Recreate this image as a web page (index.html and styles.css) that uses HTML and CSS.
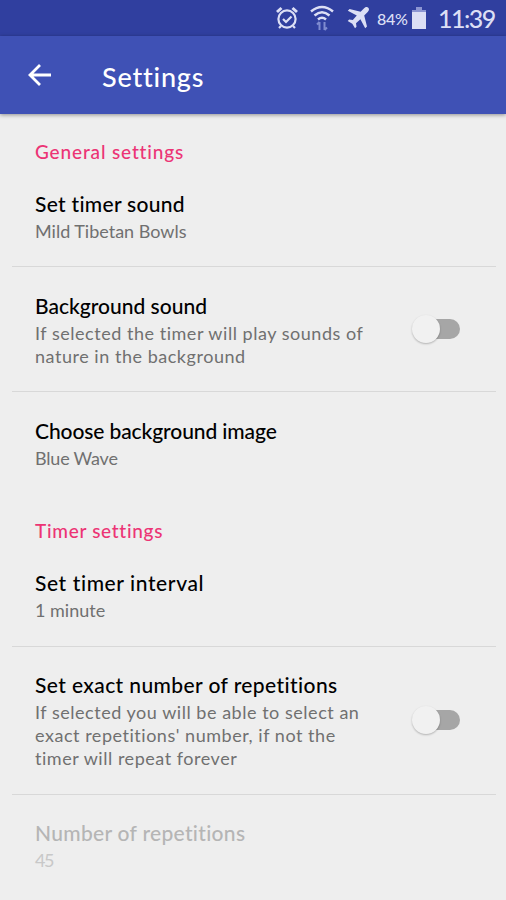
FILE: index.html
```html
<!DOCTYPE html>
<html lang="en">
<head>
  <meta charset="UTF-8" />
  <meta name="viewport" content="width=device-width, initial-scale=1.0"/>
  <title>Settings</title>
  <link rel="stylesheet" href="styles.css">
</head>
<body>
  <div class="status-bar">
    <svg class="icon-alarm" width="22" height="24" viewBox="0 0 22 24" fill="none" stroke="#dcdff5" stroke-width="2.2">
      <circle cx="11" cy="13" r="8.6"/>
      <path d="M7 13l3 3 5.500-5.500"/>
      <path d="M1 6l4.500-4M21 6l-4.500-4" stroke-width="3"/>
      <path d="M5 20l-2 2M17 20l2 2"/>
    </svg>
    <svg class="icon-wifi" width="24" height="26" viewBox="0 0 24 26" fill="none" stroke="#dcdff5" stroke-width="2.5">
      <path d="M1 6.500Q12-2.500 23 6.500"/>
      <path d="M4.500 10.500Q12 4 19.500 10.500"/>
      <path d="M8 14.500Q12 11 16 14.500"/>
      <path d="M9.500 17v8M7 19.500l2.500-2.500M14.500 17v8M17 22.500L14.500 25" stroke="#7f8bd0" stroke-width="2"/>
    </svg>
    <svg class="icon-plane" width="22" height="22" viewBox="0 0 22 22" fill="#dcdff5">
      <path d="M21.300.7c-1.200-1.200-3-.6-4.200.6L13.600 4.800 2.600 2 .8 3.800l9 4.800-4 4.400-3.600-.5L.7 14l4.600 2.700L8 21.300l1.500-1.500-.5-3.600 4.400-4 4.800 9 1.800-1.800-2.800-11 3.500-3.500c1.200-1.200 1.800-3 .6-4.200z"/>
    </svg>
    <span class="battery-level">84%</span>
    <svg class="icon-battery" width="14" height="22" viewBox="0 0 14 22">
      <path d="M4 0h6v3h4v19H0V3h4z" fill="#8d96d2"/>
      <path d="M0 5h14v17H0z" fill="#dcdff5"/>
    </svg>
    <span class="clock">11:39</span>
  </div>

  <header class="toolbar">
    <svg class="back" width="24" height="22" viewBox="0 0 24 22" fill="none" stroke="#fff" stroke-width="2.8">
      <path d="M23 11H2.500M12 1L2 11l10 10"/>
    </svg>
    <h1>Settings</h1>
  </header>

  <main>
    <section class="general">
      <h2>General settings</h2>
      <div class="item">
        <div class="text">
          <div class="title t-sound">Set timer sound</div>
          <div class="summary">Mild Tibetan Bowls</div>
        </div>
      </div>
      <div class="item">
        <div class="text">
          <div class="title">Background sound</div>
          <div class="summary long">If selected the timer will play sounds of<br>nature in the background</div>
        </div>
        <div class="switch"></div>
      </div>
      <div class="item last">
        <div class="text">
          <div class="title t-image">Choose background image</div>
          <div class="summary s-wave">Blue Wave</div>
        </div>
      </div>
    </section>

    <section class="timer">
      <h2>Timer settings</h2>
      <div class="item">
        <div class="text">
          <div class="title t-interval">Set timer interval</div>
          <div class="summary">1 minute</div>
        </div>
      </div>
      <div class="item">
        <div class="text">
          <div class="title t-exact">Set exact number of repetitions</div>
          <div class="summary long">If selected you will be able to select an<br>exact repetitions' number, if not the<br>timer will repeat forever</div>
        </div>
        <div class="switch"></div>
      </div>
      <div class="item last disabled">
        <div class="text">
          <div class="title t-number">Number of repetitions</div>
          <div class="summary s-count">45</div>
        </div>
      </div>
    </section>
  </main>
</body>
</html>
```

FILE: styles.css
```css
* {
  margin: 0;
  padding: 0;
  box-sizing: border-box;
}

body {
  height: 900px;
  overflow: hidden;
  background-color: #eeeeee;
  color: #111;
  font-family: Lato, sans-serif;
  font-variant-ligatures: none;
  white-space: nowrap;
}

.status-bar {
  display: flex;
  align-items: center;
  height: 36px;
  padding-left: 276px;
  background-color: #303f9f;
  color: #dcdff5;
}

.icon-wifi {
  margin-left: 12px;
}

.icon-plane {
  margin-left: 13px;
}

.battery-level {
  width: 31px;
  margin-left: 8px;
  font-size: 16px;
  font-weight: 500;
  letter-spacing: -0.3px;
}

.icon-battery {
  margin-left: 4px;
}

.clock {
  margin-left: 12px;
  font-size: 25px;
  font-weight: 500;
  line-height: 36px;
  letter-spacing: -1.5px;
}

.toolbar {
  display: flex;
  align-items: center;
  height: 78px;
  padding-left: 28px;
  background-color: #3f51b5;
  color: #fff;
  box-shadow: 0 1px 4px rgba(0, 0, 0, 0.4);
}

h1 {
  margin-left: 50px;
  padding-top: 3px;
  font-size: 27px;
  font-weight: 500;
  line-height: 36px;
  letter-spacing: 0.8px;
}

h2 {
  height: 51px;
  padding: 26px 0 0 35px;
  color: #ec3475;
  font-size: 19px;
  font-weight: 500;
  line-height: 24px;
  letter-spacing: 0.85px;
}

.timer h2 {
  height: 52px;
  letter-spacing: 0.7px;
}

.item {
  display: flex;
  justify-content: space-between;
  align-items: center;
  margin: 0 10px 0 12px;
  padding: 25px 36px 23px 23px;
  border-bottom: 1px solid #d8d8d8;
}

.timer .item {
  padding-top: 24px;
  padding-bottom: 24px;
}

.item.last {
  border-bottom: none;
}

.title {
  margin-bottom: 2px;
  color: #000;
  font-size: 21px;
  font-weight: 500;
  line-height: 28px;
}

.t-sound {
  letter-spacing: 0.3px;
}

.t-image {
  letter-spacing: -0.1px;
}

.t-interval {
  letter-spacing: 0.6px;
}

.t-exact {
  letter-spacing: 0.4px;
}

.t-number {
  letter-spacing: 0.3px;
}

.summary {
  color: #707070;
  font-size: 18px;
  line-height: 23px;
}

.summary.long {
  letter-spacing: 0.53px;
}

.s-wave {
  letter-spacing: -0.2px;
}

.s-count {
  letter-spacing: -1.5px;
}

.disabled .title {
  color: #b5b5b5;
}

.disabled .summary {
  color: #c8c8c8;
}

.switch {
  position: relative;
  width: 40px;
  height: 20px;
  margin-bottom: 2px;
  border-radius: 10px;
  background-color: #a6a6a6;
}

.switch::before {
  content: "";
  position: absolute;
  top: -4px;
  left: -8px;
  width: 28px;
  height: 28px;
  border-radius: 50%;
  background-color: #f1f1f1;
  box-shadow: 0 1px 2px rgba(0, 0, 0, 0.25);
}
```
